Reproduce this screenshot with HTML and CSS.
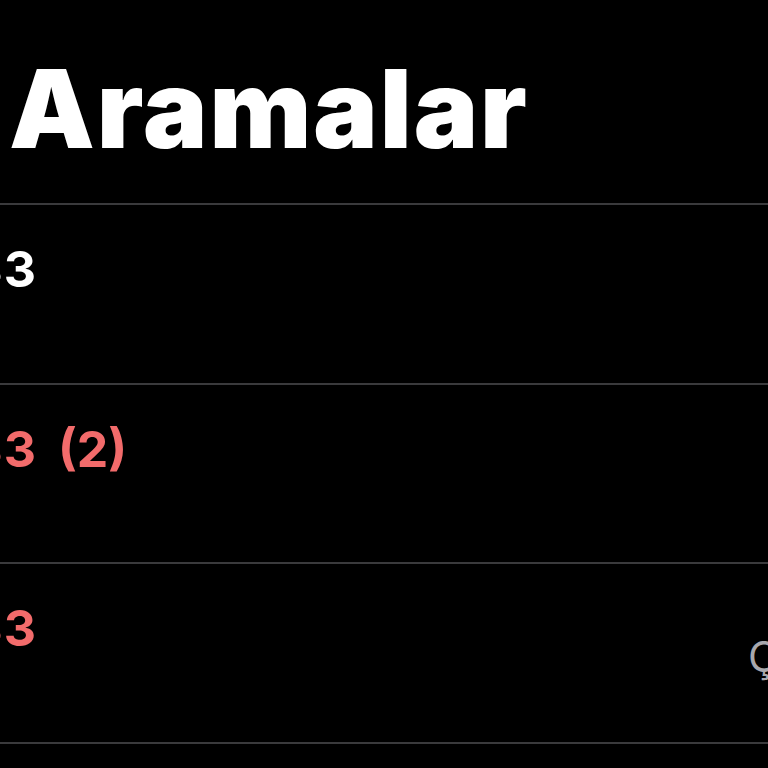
FILE: index.html
```html
<!DOCTYPE html>
<html lang="tr">
<head>
<meta charset="utf-8">
<title>Son Aramalar</title>
<link rel="stylesheet" href="styles.css">
</head>
<body>
  <div class="screen">
    <h1 class="title">Aramalar</h1>
    <ul class="calls">
      <li class="call">
        <div class="who">
          <span class="number-box"><span class="number">0532 555 44 33</span></span>
        </div>
      </li>
      <li class="call missed">
        <div class="who">
          <span class="number-box"><span class="number">0532 555 44 33</span></span>
          <span class="count">(2)</span>
        </div>
      </li>
      <li class="call missed">
        <div class="who">
          <span class="number-box"><span class="number">0532 555 44 33</span></span>
        </div>
        <span class="when">Çarşamba</span>
      </li>
      <li class="call"></li>
    </ul>
  </div>
</body>
</html>
```

FILE: styles.css
```css
html, body {
  margin: 0;
  padding: 0;
  background: #000;
}

body {
  width: 768px;
  height: 768px;
  overflow: hidden;
  font-family: Inter, "Noto Sans", "Liberation Sans", sans-serif;
  color: #fff;
}

.screen {
  display: flex;
  flex-direction: column;
}

.title {
  margin: 55px 0 0 0;
  padding-left: 9px;
  font-size: 108px;
  line-height: 108px;
  font-weight: 900;
  letter-spacing: 2px;
  height: 108px;
}

.calls {
  list-style: none;
  margin: 40px 0 0 0;
  padding: 0;
}

.call {
  border-top: 2px solid #3a3a3c;
  height: 177.7px;
  display: flex;
  align-items: flex-start;
}

.who {
  display: flex;
  align-items: baseline;
  margin-top: 39px;
  font-size: 50px;
  line-height: 50px;
  font-weight: 700;
  flex: 1;
  white-space: nowrap;
}

.number-box {
  width: 36px;
  display: flex;
  justify-content: flex-end;
}

.number {
  flex: none;
  letter-spacing: 1px;
  margin-right: -1px;
}

.count {
  margin-left: 22px;
}

.missed .who {
  color: #f26b6b;
}

.when {
  width: 20px;
  flex: none;
  white-space: nowrap;
  margin-top: 72px;
  font-size: 42px;
  line-height: 42px;
  font-weight: 400;
  color: #a8a8ad;
}
```
